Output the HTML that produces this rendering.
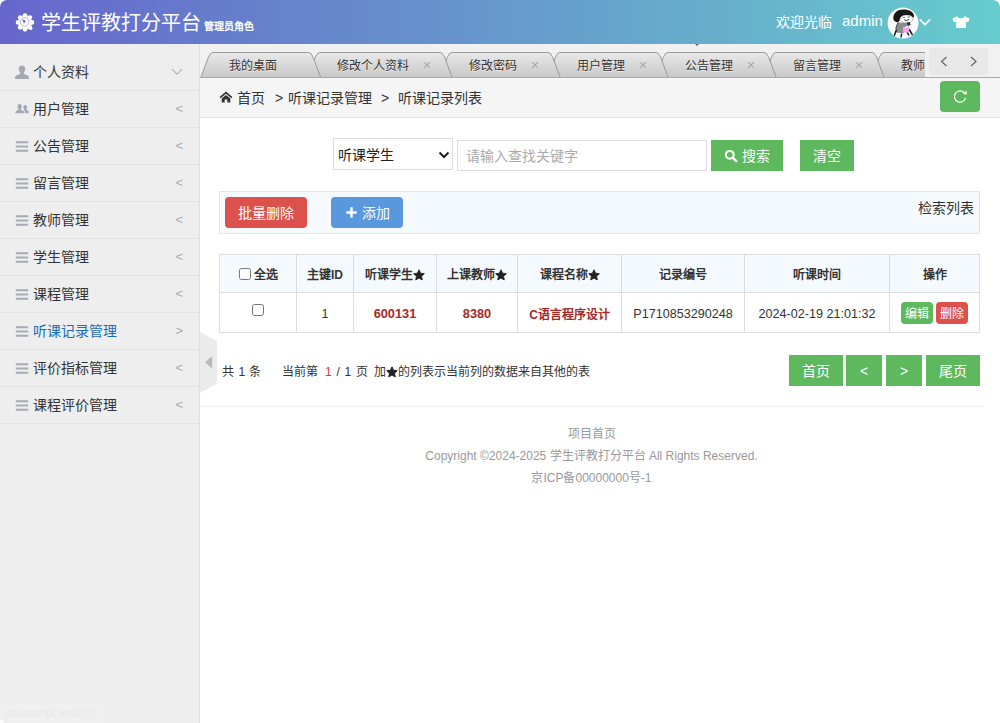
<!DOCTYPE html>
<html lang="zh-CN">
<head>
<meta charset="utf-8">
<title>学生评教打分平台</title>
<style>
*{box-sizing:border-box;margin:0;padding:0}
html,body{width:1000px;height:723px;overflow:hidden;background:#fff}
body{font-family:"Liberation Sans",sans-serif;font-size:14px;color:#333;position:relative}
.abs{position:absolute}
/* header */
#hd{position:absolute;left:0;top:0;width:1000px;height:44px;border-radius:7px 7px 0 0;
 background:linear-gradient(to right,#6666cc 0%,#66cccc 100%)}
#hd .title{position:absolute;left:41px;top:9px;font-size:20px;line-height:28px;color:#fff;white-space:nowrap}
#hd .role{position:absolute;left:204px;top:20px;font-size:10px;line-height:14px;font-weight:bold;color:#fff;white-space:nowrap}
#hd .wel{position:absolute;left:776px;top:12px;font-size:14px;line-height:20px;color:#fff;white-space:nowrap}
#hd .adm{position:absolute;left:842px;top:11px;font-size:15px;line-height:20px;color:#fff;white-space:nowrap}
/* sidebar */
#side{position:absolute;left:0;top:44px;width:200px;height:679px;background:#eee;border-right:1px solid #e1e1e1;border-radius:0 0 0 7px}
#side ul{list-style:none;position:absolute;left:0;top:10px;width:199px}
#side li{position:relative;height:37px;border-bottom:1px solid #e2e2e2;line-height:36px;font-size:14px;color:#333;padding-left:33px;white-space:nowrap}
#side li.act{color:#1b6cb3}
#side li .ar{position:absolute;right:16px;top:0;color:#aaa;font-size:13px}
#side li svg.ic{position:absolute;left:16px;top:12px}
/* tabs */
#tabbar{position:absolute;left:200px;top:44px;width:800px;height:34px;background:#f1f1f1;overflow:hidden}
#tabline{position:absolute;left:200px;top:77px;width:800px;height:1px;background:#aaa}
/* breadcrumb */
#bc{position:absolute;left:200px;top:78px;width:800px;height:40px;background:#f5f5f5;border-bottom:1px solid #e5e5e5}
#bc span{position:absolute;top:10px;line-height:20px;font-size:14px;color:#333;white-space:nowrap}

#tabbar .tt{position:absolute;top:12px;line-height:20px;font-size:12px;color:#333;white-space:nowrap;text-shadow:0 1px 0 rgba(255,255,255,.6)}
#tabbar .tx{position:absolute;top:11px;width:10px;text-align:center;line-height:20px;font-size:15px;color:#aaa}
#navmask{position:absolute;left:925px;top:44px;width:75px;height:33px;background:#f1f1f1}
#navbox{position:absolute;left:929px;top:48px;width:59px;height:27px;background:#e8e8e8;border-radius:4px}
#refresh{position:absolute;left:940px;top:81px;width:40px;height:31px;background:#5eb95e;border-radius:4px}

#sel{position:absolute;left:333px;top:138px;width:120px;height:32px;border:1px solid #ddd;background:#fff;font-size:14px;line-height:32px;padding-left:4px;color:#222}
#kw{position:absolute;left:457px;top:140px;width:250px;height:31px;border:1px solid #ddd;background:#fff;font-size:14px;line-height:30px;padding-left:8px;color:#aaa}
#tool{position:absolute;left:219px;top:191px;width:761px;height:43px;background:#f5fafe;border:1px solid #e5e5e5}
#tb{position:absolute;left:219px;top:254px;width:760px;border-collapse:collapse;table-layout:fixed}
#tb th,#tb td{border:1px solid #ddd;text-align:center;font-size:12px;height:39px;color:#333;white-space:nowrap;vertical-align:middle}
#tb th{background:#f5fafe;font-weight:bold;height:38px}
#tb td{height:40px;font-size:12.6px;padding-top:2px}
#tb td.np{padding-top:0}
#tb td.n{font-size:12.8px}
#tb td.c{font-size:12px}
#tb td.rd{color:#a52a2a;font-weight:bold}
#pg{position:absolute;left:222px;top:362px;height:20px}
#pg span{position:absolute;top:0;line-height:20px;font-size:12px;color:#333;white-space:nowrap}
#hr{position:absolute;left:200px;top:406px;width:784px;height:1px;background:#eee}
#ft{position:absolute;left:200px;top:423px;width:783px;text-align:center;font-size:12px;color:#999;line-height:22px}

.cb{display:inline-block;width:12px;height:12px;border:1px solid #767676;border-radius:2.5px;background:#fff;vertical-align:middle;margin-right:3px;position:relative;top:-2px}
.sb{display:inline-block;width:32px;height:22px;line-height:24px;overflow:hidden;border-radius:4px;color:#fff;font-size:12px;font-weight:normal;vertical-align:middle}
#stat{position:absolute;left:0;top:702px;width:105px;height:21px;background:#f0f0f0;border-radius:0 4px 0 7px;color:#e9e9e9;font-size:12px;line-height:22px;padding-left:5px;white-space:nowrap}
.btn{position:absolute;color:#fff;font-size:14px;text-align:center;white-space:nowrap}
.g{background:#5eb95e}
.r{background:#dd514c}
.b{background:#5a98de}
</style>
</head>
<body>
<div id="hd">
<svg class="abs" style="left:0;top:0" width="50" height="44" viewBox="0 0 50 44"><g fill="#fff"><circle cx="25.00" cy="15.50" r="2.35"/><circle cx="29.88" cy="17.52" r="2.35"/><circle cx="31.90" cy="22.40" r="2.35"/><circle cx="29.88" cy="27.28" r="2.35"/><circle cx="25.00" cy="29.30" r="2.35"/><circle cx="20.12" cy="27.28" r="2.35"/><circle cx="18.10" cy="22.40" r="2.35"/><circle cx="20.12" cy="17.52" r="2.35"/><circle cx="25" cy="22.4" r="6.7"/></g>
<circle cx="24.7" cy="21.799999999999997" r="4.3" fill="none" stroke="#8f8fdd" stroke-width=".7"/><path d="M22.3,19.6 L25,20 L25.4,22.6 L23.6,22.9 z" fill="#6a68cc"/><path d="M27.5,25 L32,29.5" stroke="#fff" stroke-width="2.2"/></svg>
<svg class="abs" style="left:887px;top:7px" width="32" height="32" viewBox="0 0 32 32">
<defs><clipPath id="avc"><circle cx="16" cy="16" r="15.4"/></clipPath></defs>
<circle cx="16" cy="16" r="15.4" fill="#fff"/>
<g clip-path="url(#avc)">
<path d="M6.3,11.5 C6,5.5 11,2.3 16.5,2.4 C22,2.4 27.3,5 27,9 C27,10 26.6,10.6 26,10.6 C24.5,8.6 21.5,7.6 18.5,8 C15,8.5 13.2,10.3 12.8,12.6 C12.5,14.4 11.5,15.3 10,15.2 C8,15 6.5,13.6 6.3,11.5 z" fill="#161616"/>
<path d="M12.8,12.5 C13.2,10 15.5,8.4 18.8,8.1 C22,7.8 25.2,9 26,11 C26.4,13 24.8,15.3 21.5,15.6 C17.5,16 13.5,15.5 12.8,12.5 z" fill="#fff" stroke="#555" stroke-width=".4"/>
<path d="M15.8,10.8 l2.2,-.5 M20.6,10 l2.3,-.2" stroke="#333" stroke-width=".7"/><path d="M17.2,12.8 q2.4,1.7 4.8,-.5 q-2,2.6 -4.8,.5 z" fill="#222" stroke="#222" stroke-width=".5"/>
<path d="M19.5,15.6 l3.5,-.3 l.6,2.6 l-3,1 z" fill="#2a2a2a"/>
<path d="M11,15.5 L19.5,16 L20,19 L17,20.5 L16.5,26.5 L10,25.5 L8.8,21 z" fill="#8c8c8c"/>
<path d="M11,15.5 L8.8,21 L10,25.5" stroke="#222" stroke-width=".8" fill="none"/>
<path d="M16,19.6 l1.6,1.2 l2,-.1 l1.7,-1.6 l1.6,2.6 l-.2,2.6 l-2.4,1.6 l-3.2,-.3 l-1.3,-2.6 z" fill="#f3a4ef"/>
<path d="M9.3,23 L7.2,29 M14.6,26.5 L14,30.5 M22.3,22.5 L25.5,28 M20.5,25.5 l1.5,3" stroke="#1c1c1c" stroke-width="1.5" fill="none"/>
</g></svg>
<svg class="abs" style="left:918px;top:17px" width="14" height="10" viewBox="0 0 14 10"><path d="M1.8,2.4 L7,7.6 L12.2,2.4" fill="none" stroke="#fff" stroke-width="1.5"/></svg>
<svg class="abs" style="left:951px;top:15px" width="20" height="14" viewBox="0 0 20 14"><path d="M6.3,1.3 C7.2,2.9 8.5,3.5 10,3.5 C11.5,3.5 12.8,2.9 13.7,1.3 L18.6,3.6 L17.2,7.2 L14.9,6.4 V13 H5.1 V6.4 L2.8,7.2 L1.4,3.6 z" fill="#fff"/></svg>
  <div class="title">学生评教打分平台</div>
  <div class="role">管理员角色</div>
  <div class="wel">欢迎光临</div>
  <div class="adm">admin</div>
</div>
<div id="side">
  <ul>
    <li><svg class="ic" width="16" height="16" viewBox="0 0 16 16" style="left:14px;top:9.5px"><path d="M8,1.6 C10,1.6 11.2,3 11.2,5 C11.2,6.6 10.6,7.8 9.7,8.6 C9.6,9.6 10,10 11,10.5 L13.6,11.6 C14.6,12.1 15,12.8 15,14.2 V15 H1 V14.2 C1,12.8 1.4,12.1 2.4,11.6 L5,10.5 C6,10 6.4,9.6 6.3,8.6 C5.4,7.8 4.8,6.6 4.8,5 C4.8,3 6,1.6 8,1.6 z" fill="#a3a8b2"/></svg>个人资料<svg class="abs" style="left:170px;top:13px" width="14" height="10" viewBox="0 0 14 10"><path d="M2,2.2 L7,7.2 L12,2.2" fill="none" stroke="#b0b2ba" stroke-width="1.1"/></svg></li>
    <li><svg class="ic" width="16" height="16" viewBox="0 0 16 16" style="left:14px;top:9px"><g fill="#a3a8b2"><path d="M5.6,4 C7,4 7.8,5 7.8,6.4 C7.8,7.5 7.4,8.3 6.8,8.9 C6.8,9.5 7,9.8 7.7,10.1 L9.4,10.9 C10.1,11.2 10.4,11.7 10.4,12.6 V13.2 H1.4 V12.6 C1.4,11.7 1.7,11.2 2.4,10.9 L3.7,10.1 C4.4,9.8 4.6,9.5 4.5,8.9 C3.9,8.3 3.5,7.5 3.5,6.4 C3.5,5 4.2,4 5.6,4 z"/><path d="M11.2,5 C12.4,5 13.1,5.9 13.1,7 C13.1,7.9 12.8,8.7 12.3,9.2 C12.3,9.7 12.5,9.9 13,10.2 L14,10.8 C14.5,11.1 14.8,11.5 14.8,12.3 V13.2 H11.2 V12.4 C11.2,11.4 10.8,10.8 10,10.4 L9.6,10.1 C10,9.9 10.1,9.6 10.1,9.2 C9.6,8.7 9.3,7.9 9.3,7 C9.3,5.9 10,5 11.2,5 z"/></g></svg>用户管理<span class="ar">&lt;</span></li>
    <li><svg class="ic" width="16" height="16" viewBox="0 0 16 16" style="left:14px;top:10px"><path d="M1.8,4.3 H14.2 M1.8,8.5 H14.2 M1.8,12.7 H14.2" stroke="#a6abb5" stroke-width="2"/></svg>公告管理<span class="ar">&lt;</span></li>
    <li><svg class="ic" width="16" height="16" viewBox="0 0 16 16" style="left:14px;top:10px"><path d="M1.8,4.3 H14.2 M1.8,8.5 H14.2 M1.8,12.7 H14.2" stroke="#a6abb5" stroke-width="2"/></svg>留言管理<span class="ar">&lt;</span></li>
    <li><svg class="ic" width="16" height="16" viewBox="0 0 16 16" style="left:14px;top:10px"><path d="M1.8,4.3 H14.2 M1.8,8.5 H14.2 M1.8,12.7 H14.2" stroke="#a6abb5" stroke-width="2"/></svg>教师管理<span class="ar">&lt;</span></li>
    <li><svg class="ic" width="16" height="16" viewBox="0 0 16 16" style="left:14px;top:10px"><path d="M1.8,4.3 H14.2 M1.8,8.5 H14.2 M1.8,12.7 H14.2" stroke="#a6abb5" stroke-width="2"/></svg>学生管理<span class="ar">&lt;</span></li>
    <li><svg class="ic" width="16" height="16" viewBox="0 0 16 16" style="left:14px;top:10px"><path d="M1.8,4.3 H14.2 M1.8,8.5 H14.2 M1.8,12.7 H14.2" stroke="#a6abb5" stroke-width="2"/></svg>课程管理<span class="ar">&lt;</span></li>
    <li class="act"><svg class="ic" width="16" height="16" viewBox="0 0 16 16" style="left:14px;top:10px"><path d="M1.8,4.3 H14.2 M1.8,8.5 H14.2 M1.8,12.7 H14.2" stroke="#a6abb5" stroke-width="2"/></svg>听课记录管理<span class="ar">&gt;</span></li>
    <li><svg class="ic" width="16" height="16" viewBox="0 0 16 16" style="left:14px;top:10px"><path d="M1.8,4.3 H14.2 M1.8,8.5 H14.2 M1.8,12.7 H14.2" stroke="#a6abb5" stroke-width="2"/></svg>评价指标管理<span class="ar">&lt;</span></li>
    <li><svg class="ic" width="16" height="16" viewBox="0 0 16 16" style="left:14px;top:10px"><path d="M1.8,4.3 H14.2 M1.8,8.5 H14.2 M1.8,12.7 H14.2" stroke="#a6abb5" stroke-width="2"/></svg>课程评价管理<span class="ar">&lt;</span></li>
  </ul>
</div>
<svg class="abs" style="left:200px;top:330px" width="18" height="64" viewBox="0 0 18 64"><path d="M0,1.8 L17,11.2 V53.5 L0,62.9 z" fill="#ebebeb"/><path d="M5,32.3 L12.2,26 V38.8 z" fill="#bbb"/></svg>
<div id="stat">javascript:void(0);</div>
<div id="tabbar">
<svg id="tabsvg" width="800" height="34" viewBox="200 44 800 34" style="position:absolute;left:0;top:0">
<defs><linearGradient id="tg" x1="0" y1="0" x2="0" y2="1"><stop offset="0" stop-color="#e9e9e9"/><stop offset="1" stop-color="#c8c8c8"/></linearGradient></defs>
<path d="M871,77.5 q1,0 1.5,-2 l7,-18.5 q1.7,-4.5 4.5,-4.5 H980 q2.8,0 4.5,4.5 l7,18.5 q.5,2 1.5,2 z" fill="url(#tg)" stroke="#9a9a9a" stroke-width="1"/>
<path d="M763,77.5 q1,0 1.5,-2 l7,-18.5 q1.7,-4.5 4.5,-4.5 H872 q2.8,0 4.5,4.5 l7,18.5 q.5,2 1.5,2 z" fill="url(#tg)" stroke="#9a9a9a" stroke-width="1"/>
<path d="M655,77.5 q1,0 1.5,-2 l7,-18.5 q1.7,-4.5 4.5,-4.5 H764 q2.8,0 4.5,4.5 l7,18.5 q.5,2 1.5,2 z" fill="url(#tg)" stroke="#9a9a9a" stroke-width="1"/>
<path d="M547,77.5 q1,0 1.5,-2 l7,-18.5 q1.7,-4.5 4.5,-4.5 H656 q2.8,0 4.5,4.5 l7,18.5 q.5,2 1.5,2 z" fill="url(#tg)" stroke="#9a9a9a" stroke-width="1"/>
<path d="M439,77.5 q1,0 1.5,-2 l7,-18.5 q1.7,-4.5 4.5,-4.5 H548 q2.8,0 4.5,4.5 l7,18.5 q.5,2 1.5,2 z" fill="url(#tg)" stroke="#9a9a9a" stroke-width="1"/>
<path d="M307,77.5 q1,0 1.5,-2 l7,-18.5 q1.7,-4.5 4.5,-4.5 H440 q2.8,0 4.5,4.5 l7,18.5 q.5,2 1.5,2 z" fill="url(#tg)" stroke="#9a9a9a" stroke-width="1"/>
<path d="M200,77.5 q1,0 1.5,-2 l7,-18.5 q1.7,-4.5 4.5,-4.5 H308.5 q2.8,0 4.5,4.5 l7,18.5 q.5,2 1.5,2 z" fill="url(#tg)" stroke="#9a9a9a" stroke-width="1"/>
</svg>
<span class="tt" style="left:29px">我的桌面</span>
<span class="tt" style="left:137px">修改个人资料</span>
<span class="tx" style="left:222px">×</span>
<span class="tt" style="left:269px">修改密码</span>
<span class="tx" style="left:330px">×</span>
<span class="tt" style="left:377px">用户管理</span>
<span class="tx" style="left:438px">×</span>
<span class="tt" style="left:485px">公告管理</span>
<span class="tx" style="left:546px">×</span>
<span class="tt" style="left:593px">留言管理</span>
<span class="tx" style="left:654px">×</span>
<span class="tt" style="left:701px">教师管理</span>
<span class="tx" style="left:762px">×</span>
</div>
<svg id="speck" class="abs" style="left:695px;top:44px" width="4" height="2" viewBox="0 0 4 2"><path d="M0,0 H4 L2,2 z" fill="#5a6a7a"/></svg>
<div id="navmask"></div>
<div id="navbox">
<svg width="60" height="27" viewBox="0 0 60 27" style="position:absolute;left:0;top:0"><path d="M17.5,9 L12.5,13.5 L17.5,18" fill="none" stroke="#666" stroke-width="1.2"/><path d="M42,9 L47,13.5 L42,18" fill="none" stroke="#666" stroke-width="1.2"/></svg>
</div>
<div id="tabline"></div>
<div id="bc">
<svg class="abs" style="left:19px;top:13px" width="14" height="12" viewBox="0 0 14 12"><path d="M7,0.6 L13.4,6 L12.3,7.2 L7,2.8 L1.7,7.2 L0.6,6 z" fill="#333"/><path d="M7,4 L11.3,7.6 V11.4 H8.3 V8.4 H5.7 V11.4 H2.7 V7.6 z" fill="#333"/></svg>
  <span style="left:37px">首页</span>
  <span style="left:75px">&gt;</span>
  <span style="left:88px">听课记录管理</span>
  <span style="left:181px">&gt;</span>
  <span style="left:198px">听课记录列表</span>
</div>
<div id="main">
  <div id="refresh"><svg width="40" height="31" viewBox="0 0 40 31"><path d="M24.4,12 A5.6,5.6 0 1 0 25.6,16.6" fill="none" stroke="#fff" stroke-width="1.25"/><path d="M22.8,12.9 L26.9,13.5 L26.4,9.5 z" fill="#fff"/></svg></div>
  <!-- search row -->
  <div id="sel">听课学生<svg width="12" height="8" viewBox="0 0 12 8" style="position:absolute;right:2px;top:12px"><path d="M1.5,1.5 L6,6 L10.5,1.5" fill="none" stroke="#222" stroke-width="2"/></svg></div>
  <div id="kw">请输入查找关键字</div>
  <div class="btn g" style="left:711px;top:140px;width:72px;height:31px;line-height:33px;padding-left:18px"><svg style="position:absolute;left:13px;top:9px" width="14" height="14" viewBox="0 0 14 14"><circle cx="5.8" cy="5.8" r="3.9" fill="none" stroke="#fff" stroke-width="2"/><path d="M8.7,8.7 L12.2,12.2" stroke="#fff" stroke-width="2.4" stroke-linecap="round"/></svg>搜索</div>
  <div class="btn g" style="left:800px;top:140px;width:54px;height:31px;line-height:33px">清空</div>
  <!-- toolbar -->
  <div id="tool">
    <div class="btn r" style="left:5px;top:5px;width:82px;height:31px;line-height:33px;border-radius:4px">批量删除</div>
    <div class="btn b" style="left:111px;top:5px;width:72px;height:31px;line-height:33px;border-radius:4px;padding-left:18px"><svg style="position:absolute;left:15px;top:10px" width="11" height="11" viewBox="0 0 11 11"><path d="M5.5,0.3 V10.7 M0.3,5.5 H10.7" stroke="#fff" stroke-width="2.4"/></svg>添加</div>
    <span style="position:absolute;right:5px;top:6px;line-height:20px;font-size:14px;color:#333">检索列表</span>
  </div>
  <!-- table -->
  <table id="tb" cellspacing="0" cellpadding="0">
    <tr class="th"><th style="width:77px"><span class="cb"></span>全选</th><th style="width:57px">主键ID</th><th style="width:83px">听课学生<svg width="12" height="12" viewBox="0 0 12 12" style="vertical-align:-2px"><polygon points="6.00,0.80 7.59,4.22 11.33,4.67 8.57,7.23 9.29,10.93 6.00,9.10 2.71,10.93 3.43,7.23 0.67,4.67 4.41,4.22" fill="#222" stroke="#222" stroke-width=".9" stroke-linejoin="round"/></svg></th><th style="width:81px">上课教师<svg width="12" height="12" viewBox="0 0 12 12" style="vertical-align:-2px"><polygon points="6.00,0.80 7.59,4.22 11.33,4.67 8.57,7.23 9.29,10.93 6.00,9.10 2.71,10.93 3.43,7.23 0.67,4.67 4.41,4.22" fill="#222" stroke="#222" stroke-width=".9" stroke-linejoin="round"/></svg></th><th style="width:104px">课程名称<svg width="12" height="12" viewBox="0 0 12 12" style="vertical-align:-2px"><polygon points="6.00,0.80 7.59,4.22 11.33,4.67 8.57,7.23 9.29,10.93 6.00,9.10 2.71,10.93 3.43,7.23 0.67,4.67 4.41,4.22" fill="#222" stroke="#222" stroke-width=".9" stroke-linejoin="round"/></svg></th><th style="width:123px">记录编号</th><th style="width:145px">听课时间</th><th style="width:90px">操作</th></tr>
    <tr class="td"><td class="np"><span class="cb" style="margin:0;top:-3px"></span></td><td>1</td><td class="rd n">600131</td><td class="rd n">8380</td><td class="rd c">C语言程序设计</td><td>P1710853290248</td><td>2024-02-19 21:01:32</td><td class="np"><span class="sb g">编辑</span><span class="sb r" style="margin-left:3px">删除</span></td></tr>
  </table>
  <!-- pagination -->
  <div id="pg"><span style="left:0">共</span><span style="left:16.5px">1</span><span style="left:27px">条</span><span style="left:60px">当前第</span><span style="left:103px;color:#e33">1</span><span style="left:114.5px">/</span><span style="left:122.5px">1</span><span style="left:133.5px">页</span><span style="left:152px">加<svg width="12" height="12" viewBox="0 0 12 12" style="vertical-align:-2px"><polygon points="6.00,0.80 7.59,4.22 11.33,4.67 8.57,7.23 9.29,10.93 6.00,9.10 2.71,10.93 3.43,7.23 0.67,4.67 4.41,4.22" fill="#222" stroke="#222" stroke-width=".9" stroke-linejoin="round"/></svg>的列表示当前列的数据来自其他的表</span></div>
  <div class="btn g" style="left:789px;top:355px;width:54px;height:31px;line-height:33px">首页</div>
  <div class="btn g" style="left:846px;top:355px;width:36px;height:31px;line-height:33px">&lt;</div>
  <div class="btn g" style="left:886px;top:355px;width:36px;height:31px;line-height:33px">&gt;</div>
  <div class="btn g" style="left:926px;top:355px;width:54px;height:31px;line-height:33px">尾页</div>
  <div id="hr"></div>
  <div id="ft"><p>项目首页</p><p>Copyright ©2024-2025 学生评教打分平台 All Rights Reserved.</p><p>京ICP备00000000号-1</p></div>
</div>
</body>
</html>
